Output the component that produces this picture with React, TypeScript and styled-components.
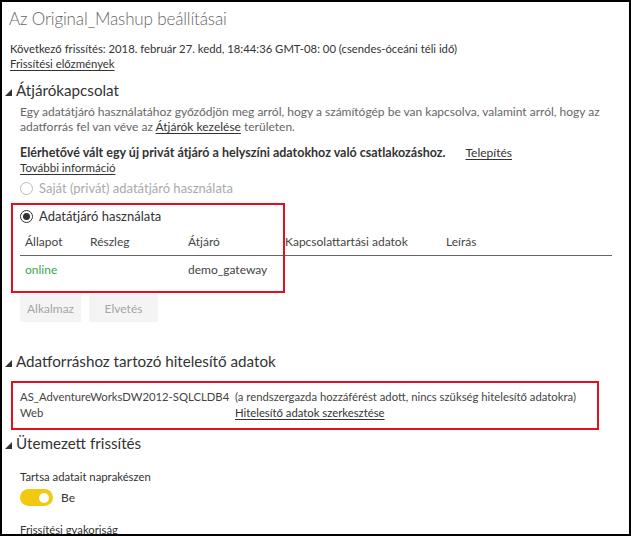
import React from "react";
import styled, { createGlobalStyle } from "styled-components";

const GlobalStyle = createGlobalStyle`
  html, body { margin: 0; padding: 0; background: #fff; }
  body { font-family: "Lato", "Noto Sans", sans-serif; color: #333; }
  * { box-sizing: border-box; }
`;

const Frame = styled.div`
  width: 631px;
  height: 536px;
  border: 2px solid #000;
  overflow: hidden;
  padding: 0 0 0 8px;
  display: flex;
  flex-direction: column;
  & > * {
    flex-shrink: 0;
  }
`;

const Title = styled.h1`
  margin: 4px 0 0 -1px;
  font-size: 17px;
  letter-spacing: -0.15px;
  font-weight: 300;
  color: #666;
  line-height: 26px;
`;

const Line = styled.div<{ $muted?: boolean; $bold?: boolean; $indent?: number; $top?: number; $size?: number }>`
  font-size: ${(p) => p.$size ?? 12}px;
  line-height: 15px;
  color: ${(p) => (p.$muted ? "#666" : "#333")};
  font-weight: ${(p) => (p.$bold ? 700 : 400)};
  margin-left: ${(p) => p.$indent ?? 0}px;
  margin-top: ${(p) => p.$top ?? 0}px;
  white-space: nowrap;
`;

const Link = styled.a<{ $gap?: number }>`
  color: #333;
  text-decoration: underline;
  text-underline-offset: 2px;
  margin-left: ${(p) => p.$gap ?? 0}px;
  cursor: pointer;
`;

const PlainLink = styled(Link)`
  font-weight: 400;
  font-size: 12px;
`;

const SectionHeader = styled.h2<{ $top: number }>`
  margin: ${(p) => p.$top}px 0 0 -5px;
  font-size: 15.2px;
  font-weight: 400;
  color: #333;
  line-height: 20px;
  display: flex;
  align-items: center;
  gap: 4px;
`;

const Tri = () => (
  <svg width="7" height="7" viewBox="0 0 7 7" style={{ marginTop: 5 }}>
    <polygon points="7,0 7,7 0,7" fill="#333" />
  </svg>
);

const RadioRow = styled.label<{ $disabled?: boolean; $top: number }>`
  display: flex;
  align-items: center;
  gap: 6px;
  margin: ${(p) => p.$top}px 0 0 10px;
  font-size: 13px;
  line-height: 18px;
  color: ${(p) => (p.$disabled ? "#aaa" : "#333")};
`;

const RadioCircle = styled.span<{ $checked?: boolean; $disabled?: boolean }>`
  width: 13px;
  height: 13px;
  border-radius: 50%;
  border: 1px solid ${(p) => (p.$disabled ? "#bbb" : "#333")};
  display: inline-flex;
  align-items: center;
  justify-content: center;
  &::after {
    content: "";
    width: 7px;
    height: 7px;
    border-radius: 50%;
    background: ${(p) => (p.$checked ? "#333" : "transparent")};
  }
`;

const GatewayArea = styled.div`
  position: relative;
`;

const Highlight = styled.div`
  position: absolute;
  left: 1px;
  top: 6px;
  width: 274px;
  height: 90px;
  border: 2px solid #e3101c;
  pointer-events: none;
`;

const Table = styled.div`
  margin: 8px 0 0 10px;
  width: 592px;
`;

const Row = styled.div<{ $header?: boolean }>`
  display: grid;
  grid-template-columns: 65px 98px 97px 161px 1fr;
  padding-left: 5px;
  font-size: 12px;
  line-height: 18px;
  color: #444;
  ${(p) => (p.$header ? "border-bottom: 1px solid #666; padding-bottom: 4px;" : "padding-top: 5px;")}
`;

const Status = styled.span`
  color: #3aa74f;
`;

const Buttons = styled.div`
  display: flex;
  gap: 8px;
  margin: 15px 0 0 10px;
`;

const Button = styled.button<{ $w: number }>`
  width: ${(p) => p.$w}px;
  height: 28px;
  border: none;
  background: #f4f4f4;
  color: #a6a6a6;
  font-family: inherit;
  font-size: 12px;
  padding: 0;
`;

const CredBox = styled.div`
  margin: 10px 0 0 1px;
  width: 588px;
  height: 49px;
  border: 2px solid #e3101c;
  padding: 6px 0 0 7px;
  display: grid;
  grid-template-columns: 215px 1fr;
  align-content: start;
  font-size: 11.3px;
  line-height: 16px;
  color: #444;
`;

const Cell = styled.div`
  white-space: nowrap;
`;

const ToggleRow = styled.div`
  display: flex;
  align-items: center;
  gap: 8px;
  margin: 5px 0 0 10px;
  font-size: 12px;
  color: #333;
`;

const Toggle = styled.span`
  width: 33px;
  height: 17px;
  border-radius: 9px;
  background: #f2c811;
  display: inline-flex;
  align-items: center;
  justify-content: flex-end;
  padding-right: 4px;
  &::after {
    content: "";
    width: 10px;
    height: 10px;
    border-radius: 50%;
    background: #fff;
  }
`;

export default function App() {
  return (
    <>
      <GlobalStyle />
      <Frame>
        <Title>Az Original_Mashup beállításai</Title>
        <Line $top={9} $size={11.3}>
          Következő frissítés: 2018. február 27. kedd, 18:44:36 GMT-08: 00 (csendes-óceáni téli idő)
        </Line>
        <Line $size={11.3}>
          <Link>Frissítési előzmények</Link>
        </Line>

        <SectionHeader $top={9}>
          <Tri />
          Átjárókapcsolat
        </SectionHeader>
        <Line $muted $indent={10} $top={4}>
          Egy adatátjáró használatához győződjön meg arról, hogy a számítógép be van kapcsolva, valamint arról, hogy az
        </Line>
        <Line $muted $indent={10}>
          adatforrás fel van véve az <Link>Átjárók kezelése</Link> területen.
        </Line>
        <Line $bold $indent={10} $top={11} $size={12.5}>
          Elérhetővé vált egy új privát átjáró a helyszíni adatokhoz való csatlakozáshoz.
          <PlainLink $gap={20}>Telepítés</PlainLink>
        </Line>
        <Line $indent={10} $size={11.5}>
          <Link>További információ</Link>
        </Line>
        <RadioRow $disabled $top={4}>
          <RadioCircle $disabled />
          Saját (privát) adatátjáró használata
        </RadioRow>

        <GatewayArea>
          <Highlight />
          <RadioRow $top={10}>
            <RadioCircle $checked />
            Adatátjáró használata
          </RadioRow>
          <Table>
            <Row $header>
              <span>Állapot</span>
              <span>Részleg</span>
              <span>Átjáró</span>
              <span>Kapcsolattartási adatok</span>
              <span>Leírás</span>
            </Row>
            <Row>
              <Status>online</Status>
              <span></span>
              <span>demo_gateway</span>
              <span></span>
              <span></span>
            </Row>
          </Table>
        </GatewayArea>

        <Buttons>
          <Button $w={61}>Alkalmaz</Button>
          <Button $w={69}>Elvetés</Button>
        </Buttons>

        <SectionHeader $top={29}>
          <Tri />
          Adatforráshoz tartozó hitelesítő adatok
        </SectionHeader>
        <CredBox>
          <Cell>AS_AdventureWorksDW2012-SQLCLDB4</Cell>
          <Cell>(a rendszergazda hozzáférést adott, nincs szükség hitelesítő adatokra)</Cell>
          <Cell>Web</Cell>
          <Cell>
            <Link>Hitelesítő adatok szerkesztése</Link>
          </Cell>
        </CredBox>

        <SectionHeader $top={3}>
          <Tri />
          Ütemezett frissítés
        </SectionHeader>
        <Line $indent={10} $top={16} $size={11.3}>
          Tartsa adatait naprakészen
        </Line>
        <ToggleRow>
          <Toggle />
          Be
        </ToggleRow>
        <Line $indent={10} $top={16} $size={11.3}>
          Frissítési gyakoriság
        </Line>
      </Frame>
    </>
  );
}
